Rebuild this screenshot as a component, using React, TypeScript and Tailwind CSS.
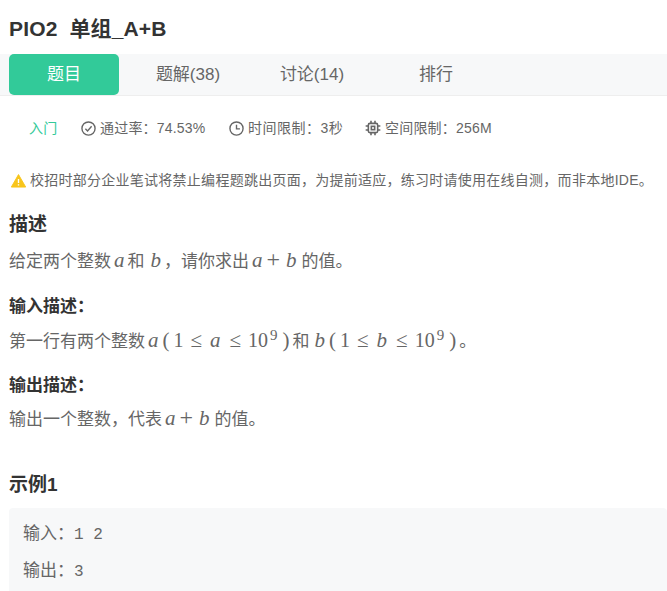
const sans = "font-['Liberation_Sans','Noto_Sans_CJK_SC',sans-serif]";

const serif = "font-['Liberation_Serif',serif] text-[21px]";

const Bound = ({ name }: { name: string }) => (
  <span className={`${serif} ml-[4px] mr-[3px] whitespace-nowrap`}>
    <span>(</span>
    <span className="ml-[4px] text-[20px]">1</span>
    <span className="ml-[7px] mr-[8px]">≤</span>
    <span className="italic">{name}</span>
    <span className="ml-[9px] mr-[7px]">≤</span>
    <span className="text-[20px]">10</span>
    <sup className="text-[15px] -top-[7px] ml-[2px]">9</sup>
    <span className="ml-[5px]">)</span>
  </span>
);

const Sum = () => (
  <span className={`${serif} ml-[3px] mr-[5px] whitespace-nowrap`}>
    <span className="italic">a</span>
    <span className="ml-[4px] mr-[6px] text-[24px] leading-[20px]">+</span>
    <span className="italic">b</span>
  </span>
);

export default function App() {
  return (
    <div className={`${sans} w-[667px] h-[591px] overflow-hidden bg-white text-[#666]`}>
      <h1 className="pl-[9px] pt-[16px] h-[54px] text-[21px] tracking-[0.15px] leading-[26px] font-bold text-[#333]">PIO2&nbsp; 单组_A+B</h1>

      {/* Tabs */}
      <div className="flex gap-[14px] pl-[9px] h-[42px] bg-[#f7f8f9] border-b border-[#eeeeee] text-[17px]">
        <div className="w-[110px] h-[41px] flex items-center justify-center rounded-[5px] bg-[#32ca99] text-white">题目</div>
        <div className="w-[110px] h-[41px] flex items-center justify-center">题解(38)</div>
        <div className="w-[110px] h-[41px] flex items-center justify-center">讨论(14)</div>
        <div className="w-[110px] h-[41px] flex items-center justify-center">排行</div>
      </div>

      {/* Meta */}
      <div className="flex items-center h-[20px] mt-[22px] pl-[29px] text-[14px] tracking-[0.2px]">
        <span className="text-[#32ca99] w-[52px]">入门</span>
        <svg width="15" height="15" viewBox="0 0 24 24" fill="none" stroke="#666" strokeWidth="2.2">
          <circle cx="12" cy="12" r="10.5" />
          <path d="M7 12.5l3.5 3.5 6.5-7.5" />
        </svg>
        <span className="ml-[4px] w-[129px]">通过率：74.53%</span>
        <svg width="15" height="15" viewBox="0 0 24 24" fill="none" stroke="#666" strokeWidth="2.2">
          <circle cx="12" cy="12" r="10.5" />
          <path d="M12 6v6.5h5.5" />
        </svg>
        <span className="ml-[4px] w-[117px] tracking-[0.5px]">时间限制：3秒</span>
        <svg width="16" height="16" viewBox="0 0 24 24" fill="none" stroke="#666" strokeWidth="2.4">
          <rect x="5" y="5" width="14" height="14" rx="2.5" />
          <rect x="9.5" y="9.5" width="5" height="5" />
          <path d="M9 1v4M15 1v4M9 19v4M15 19v4M1 9h4M1 15h4M19 9h4M19 15h4" />
        </svg>
        <span className="ml-[4px]">空间限制：256M</span>
      </div>

      {/* Notice */}
      <div className="flex items-center h-[20px] mt-[32px] pl-[10px] text-[14px] tracking-[0.26px] whitespace-nowrap">
        <svg width="15" height="15" viewBox="0 0 24 24" className="shrink-0 ml-[1px]">
          <path d="M12 2.5L23.5 22.5H.5z" fill="#f8c51c" stroke="#f8c51c" strokeWidth="1.5" strokeLinejoin="round" />
          <path d="M12 9.5v6.5M12 18v2" stroke="#fff" strokeWidth="2.2" fill="none" />
        </svg>
        <span className="ml-[4px]">校招时部分企业笔试将禁止编程题跳出页面，为提前适应，练习时请使用在线自测，而非本地IDE。</span>
      </div>

      {/* Description */}
      <div className="pl-[9px]">
        <h2 className="mt-[23px] text-[19px] leading-[24px] font-bold text-[#333]">描述</h2>
        <p className="mt-[11px] h-[24px] text-[17px] leading-[24px] whitespace-nowrap">
          给定两个整数<span className={`${serif} italic mx-[3px]`}>a</span>和<span className={`${serif} italic ml-[6px] mr-[3px]`}>b</span>，请你求出<Sum />的值。
        </p>

        <h3 className="mt-[24px] text-[17px] leading-[22px] font-bold text-[#333]">输入描述：</h3>
        <p className="mt-[8px] h-[28px] text-[17px] leading-[28px] whitespace-nowrap">
          第一行有两个整数<span className={`${serif} italic ml-[3px]`}>a</span><Bound name="a" />和<span className={`${serif} italic ml-[5px]`}>b</span><Bound name="b" />。
        </p>

        <h3 className="mt-[21px] text-[17px] leading-[22px] font-bold text-[#333]">输出描述：</h3>
        <p className="mt-[9px] h-[24px] text-[17px] leading-[24px] whitespace-nowrap">
          输出一个整数，代表<Sum />的值。
        </p>

        <h2 className="mt-[43px] text-[19px] leading-[24px] font-bold text-[#333]">示例1</h2>
      </div>

      {/* Sample */}
      <div className="mt-[11px] ml-[9px] h-[90px] rounded-t-[4px] bg-[#f7f8f9] pl-[14px] pt-[12px] text-[17px]">
        <div className="h-[37px] leading-[28px]">输入：<span className="font-['Liberation_Mono',monospace] text-[16px]">1 2</span></div>
        <div className="h-[36px] leading-[28px]">输出：<span className="font-['Liberation_Mono',monospace] text-[16px]">3</span></div>
      </div>
    </div>
  );
}
